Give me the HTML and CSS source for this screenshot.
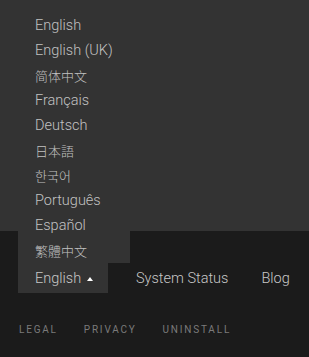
FILE: index.html
```html
<!DOCTYPE html>
<html>
<head>
  <title>Footer</title>
  <link rel="stylesheet" href="styles.css">
</head>
<body>
  <div class="page-top"></div>

  <div class="footer">
    <div class="footer-nav">
      <div class="lang">
        <ul class="lang-menu">
          <li>English</li>
          <li>English (UK)</li>
          <li lang="zh-CN">简体中文</li>
          <li>Français</li>
          <li>Deutsch</li>
          <li lang="ja">日本語</li>
          <li lang="ko">한국어</li>
          <li>Português</li>
          <li>Español</li>
          <li lang="zh-TW">繁體中文</li>
        </ul>
        <button class="lang-btn">English <span class="caret"></span></button>
      </div>
      <a href="#" class="nav-link">System Status</a>
      <a href="#" class="nav-link blog">Blog</a>
    </div>

    <!-- legal links -->
    <div class="legal">
      <a href="#">Legal</a>
      <a href="#">Privacy</a>
      <a href="#">Uninstall</a>
    </div>
  </div>
</body>
</html>
```

FILE: styles.css
```css
body {
  margin: 0;
  background-color: #1b1b1b;
  font-family: Roboto, "Liberation Sans", "Noto Sans CJK SC", sans-serif;
  font-weight: 300;
  overflow: hidden;
}
.page-top {
  height: 231px;
  background-color: #333333;
}
.footer {
  padding: 32px 0 0 18px;
  height: 94px;
}
.footer-nav {
  display: flex;
  align-items: center;
}
.lang {
  position: relative;
}
.lang-menu {
  position: absolute;
  left: 0;
  bottom: 100%;
  width: 112px;
  margin: 0;
  padding: 0;
  list-style: none;
  background-color: #333333;
}
.lang-menu li {
  height: 25px;
  line-height: 25px;
  padding-left: 17px;
  font-size: 14.5px;
  color: #c2c2c2;
  white-space: nowrap;
}
.lang-menu li[lang="zh-CN"] {
  font-family: "Noto Sans CJK SC", sans-serif;
  font-size: 13px;
}
.lang-menu li[lang="ja"] {
  font-family: "Noto Sans CJK JP", sans-serif;
  font-size: 13px;
}
.lang-menu li[lang="ko"] {
  font-family: "Noto Sans CJK KR", sans-serif;
  font-size: 13px;
}
.lang-menu li[lang="zh-TW"] {
  font-family: "Noto Sans CJK TC", sans-serif;
  font-size: 13px;
}
.lang-btn {
  display: flex;
  align-items: center;
  width: 90px;
  height: 30px;
  padding: 0 0 0 17px;
  border: none;
  background-color: #333333;
  color: #c8c8c8;
  font-family: inherit;
  font-weight: 300;
  font-size: 14.5px;
  cursor: pointer;
}
.caret {
  width: 0;
  height: 0;
  margin-left: 6px;
  margin-top: 2px;
  border-left: 3px solid transparent;
  border-right: 3px solid transparent;
  border-bottom: 4px solid #ffffff;
}
.nav-link {
  margin-left: 28px;
  color: #c8c8c8;
  font-size: 14.5px;
  text-decoration: none;
}
.nav-link.blog {
  margin-left: 33px;
}
.legal {
  display: flex;
  gap: 26px;
  margin-top: 31px;
  padding-left: 1px;
}
.legal a {
  color: #7a7a7a;
  font-size: 10px;
  font-weight: 400;
  letter-spacing: 1.8px;
  text-transform: uppercase;
  text-decoration: none;
}
```
